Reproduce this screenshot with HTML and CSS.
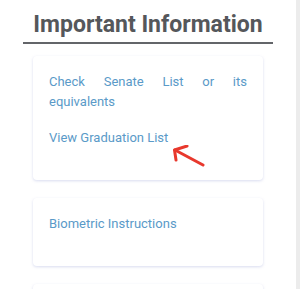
FILE: index.html
```html
<!DOCTYPE html>
<html>
<head>
<meta charset="utf-8">
<link rel="stylesheet" href="styles.css">
</head>
<body>
<div class="page">
  <main class="content">
    <div class="head-wrap">
      <h2 class="heading">Important Information</h2>
    </div>
    <div class="card">
      <p class="link justify">Check Senate List or its equivalents</p>
      <p class="link with-arrow">View Graduation List
        <svg class="arrow" width="34" height="22" viewBox="0 0 34 22">
          <path d="M4 5 L32 20" fill="none" stroke="#e8382d" stroke-width="3" stroke-linecap="round"/>
          <path d="M16 1 L3.5 5 L5 15" fill="none" stroke="#e8382d" stroke-width="3" stroke-linecap="round" stroke-linejoin="round"/>
        </svg>
      </p>
    </div>
    <div class="card">
      <p class="link">Biometric Instructions</p>
    </div>
    <div class="card card-last"></div>
  </main>
  <div class="strip"></div>
</div>
</body>
</html>
```
FILE: styles.css
```css
html, body {
  margin: 0;
  padding: 0;
  background: #ffffff;
  height: 289px;
  overflow: hidden;
}
.page {
  display: flex;
  height: 289px;
  overflow: hidden;
  font-family: Roboto, "Liberation Sans", sans-serif;
}
.content {
  width: 296px;
  display: flex;
  flex-direction: column;
  align-items: center;
  overflow: hidden;
}
.strip {
  width: 4px;
  background: #ececec;
}
.head-wrap {
  padding-top: 10px;
  margin-bottom: 12px;
}
.heading {
  margin: 0;
  font-size: 23px;
  line-height: 30px;
  font-weight: 700;
  color: #55575b;
  padding: 0 10px 2px;
  border-bottom: 2px solid #636569;
}
.card {
  width: 230px;
  box-sizing: border-box;
  background: #fff;
  border-radius: 4px;
  box-shadow: 0 1px 3px rgba(120, 130, 200, 0.28);
  padding: 16px;
  margin-bottom: 18px;
  flex-shrink: 0;
}
.link {
  margin: 0 0 16px;
  font-size: 13px;
  line-height: 20px;
  color: #5a9ac8;
}
.justify {
  text-align: justify;
}
.with-arrow {
  position: relative;
}
.arrow {
  position: absolute;
  left: 122px;
  top: 17px;
}
.card-last {
  min-height: 40px;
}
```
